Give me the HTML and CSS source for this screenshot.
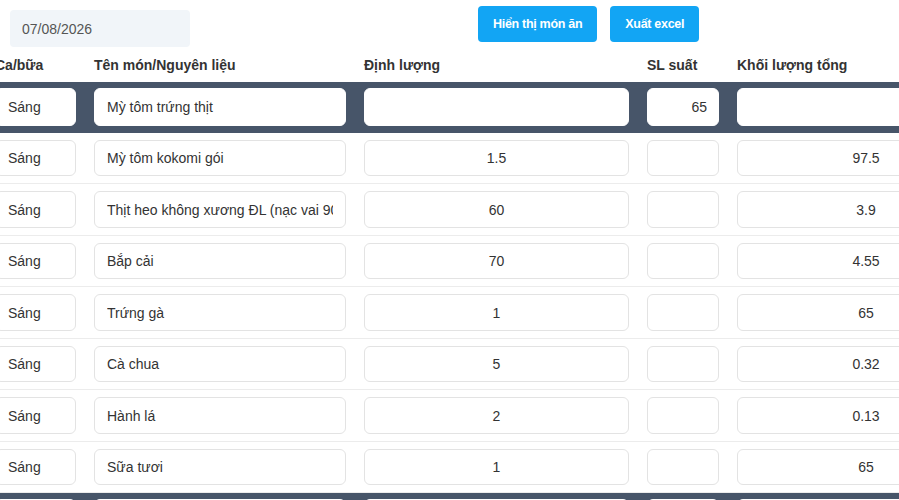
FILE: index.html
```html
<!DOCTYPE html>
<html lang="vi">
<head>
  <meta charset="UTF-8">
  <meta name="viewport" content="width=device-width, initial-scale=1.0">
  <title>Định lượng món ăn</title>
  <link rel="stylesheet" href="styles.css">
</head>
<body>
  <div class="toolbar">
    <input class="date-input" type="text" value="07/08/2026">
    <div class="actions">
      <button class="btn">Hiển thị món ăn</button>
      <button class="btn">Xuất excel</button>
    </div>
  </div>

  <div class="table-wrap">
    <table class="menu-table">
      <colgroup>
        <col class="c-meal">
        <col class="c-name">
        <col class="c-qty">
        <col class="c-serv">
        <col class="c-total">
      </colgroup>
      <thead>
        <tr>
          <th>Ca/bữa</th>
          <th>Tên món/Nguyên liệu</th>
          <th>Định lượng</th>
          <th>SL suất</th>
          <th>Khối lượng tổng</th>
        </tr>
      </thead>
      <tbody>
        <tr class="dish-row">
          <td><input class="cell left" value="Sáng"></td>
          <td><input class="cell left" value="Mỳ tôm trứng thịt"></td>
          <td><input class="cell center" value=""></td>
          <td><input class="cell right" value="65"></td>
          <td><input class="cell center" value=""></td>
        </tr>
        <tr>
          <td><input class="cell left" value="Sáng"></td>
          <td><input class="cell left" value="Mỳ tôm kokomi gói"></td>
          <td><input class="cell center" value="1.5"></td>
          <td><input class="cell right" value=""></td>
          <td><input class="cell center" value="97.5"></td>
        </tr>
        <tr>
          <td><input class="cell left" value="Sáng"></td>
          <td><input class="cell left" value="Thịt heo không xương ĐL (nạc vai 90%(10% mỡ))"></td>
          <td><input class="cell center" value="60"></td>
          <td><input class="cell right" value=""></td>
          <td><input class="cell center" value="3.9"></td>
        </tr>
        <tr>
          <td><input class="cell left" value="Sáng"></td>
          <td><input class="cell left" value="Bắp cải"></td>
          <td><input class="cell center" value="70"></td>
          <td><input class="cell right" value=""></td>
          <td><input class="cell center" value="4.55"></td>
        </tr>
        <tr>
          <td><input class="cell left" value="Sáng"></td>
          <td><input class="cell left" value="Trứng gà"></td>
          <td><input class="cell center" value="1"></td>
          <td><input class="cell right" value=""></td>
          <td><input class="cell center" value="65"></td>
        </tr>
        <tr>
          <td><input class="cell left" value="Sáng"></td>
          <td><input class="cell left" value="Cà chua"></td>
          <td><input class="cell center" value="5"></td>
          <td><input class="cell right" value=""></td>
          <td><input class="cell center" value="0.32"></td>
        </tr>
        <tr>
          <td><input class="cell left" value="Sáng"></td>
          <td><input class="cell left" value="Hành lá"></td>
          <td><input class="cell center" value="2"></td>
          <td><input class="cell right" value=""></td>
          <td><input class="cell center" value="0.13"></td>
        </tr>
        <tr>
          <td><input class="cell left" value="Sáng"></td>
          <td><input class="cell left" value="Sữa tươi"></td>
          <td><input class="cell center" value="1"></td>
          <td><input class="cell right" value=""></td>
          <td><input class="cell center" value="65"></td>
        </tr>
        <tr class="dish-row">
          <td><input class="cell left" value="Trưa"></td>
          <td><input class="cell left" value="Cơm gà xối mỡ"></td>
          <td><input class="cell center" value=""></td>
          <td><input class="cell right" value="65"></td>
          <td><input class="cell center" value=""></td>
        </tr>
      </tbody>
    </table>
  </div>
</body>
</html>
```

FILE: styles.css
```css
body {
  margin: 0;
  font-family: "Liberation Sans", Arial, sans-serif;
  font-size: 14px;
  color: #333;
  background: #fff;
  overflow: hidden;
}
.toolbar {
  display: flex;
  align-items: flex-start;
  padding-left: 10px;
  height: 47px;
}
.date-input {
  margin-top: 10px;
  width: 180px;
  height: 37px;
  box-sizing: border-box;
  padding: 0 12px;
  border: none;
  border-radius: 4px;
  background: #f1f5f9;
  color: #555;
  font-family: inherit;
  font-size: 14px;
}
.actions {
  display: flex;
  gap: 13px;
  margin-top: 6px;
  margin-left: 288px;
}
.btn {
  height: 36px;
  padding: 0 15px;
  border: none;
  border-radius: 4px;
  background: #12a5f4;
  color: #fff;
  font-family: inherit;
  font-size: 12.5px;
  font-weight: bold;
  letter-spacing: -0.3px;
}
.table-wrap {
  overflow: hidden;
}
.menu-table {
  margin-left: -14px;
  width: 1018px;
  table-layout: fixed;
  border-collapse: collapse;
}
.c-meal { width: 99px; }
.c-name { width: 270px; }
.c-qty { width: 283px; }
.c-serv { width: 90px; }
.c-total { width: 276px; }
.menu-table th {
  height: 35px;
  padding: 0 9px;
  text-align: left;
  font-weight: bold;
  font-size: 14px;
  color: #333;
}
.menu-table td {
  padding: 7px 9px;
  border-bottom: 1px solid #ececec;
}
.cell {
  display: block;
  width: 100%;
  height: 36.5px;
  box-sizing: border-box;
  padding: 0 12px;
  border: 1px solid #e3e3e3;
  border-radius: 6px;
  background: #fff;
  color: #333;
  font-family: inherit;
  font-size: 14px;
}
.cell.left { text-align: left; }
.cell.center { text-align: center; }
.cell.right { text-align: right; padding-right: 11px; }
.dish-row td {
  background: #475569;
  border-bottom: none;
  padding: 6px 9px 6.6px;
}
.dish-row .cell {
  height: 38.4px;
  border-color: #fff;
}
```
